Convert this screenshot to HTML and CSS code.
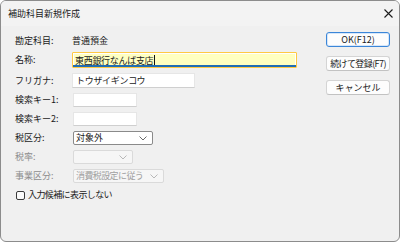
FILE: index.html
```html
<!DOCTYPE html>
<html lang="ja">
<head>
<meta charset="utf-8">
<title>補助科目新規作成</title>
<link rel="stylesheet" href="styles.css">
</head>
<body>
<div class="window">
  <div class="titlebar">
    <span class="title">補助科目新規作成</span>
    <span class="close"><svg width="9" height="9" viewBox="0 0 9 9"><path d="M0.5 0.5L8.5 8.5M8.5 0.5L0.5 8.5" stroke="#1c1c1c" stroke-width="1.1" fill="none"/></svg></span>
  </div>
  <div class="content">
    <div class="form">
      <span class="label top">勘定科目:</span><span class="value top">普通預金</span>
      <span class="label">名称:</span><div class="field name">東西銀行なんば支店<span class="caret"></span></div>
      <span class="label">フリガナ:</span><div class="field kana">トウザイギンコウ</div>
      <span class="label">検索キー1:</span><div class="field key"></div>
      <span class="label">検索キー2:</span><div class="field key"></div>
      <span class="label">税区分:</span><div class="select tax"><span>対象外</span><svg class="chev" width="8" height="5" viewBox="0 0 8 5"><path d="M0.5 0.5L4 4L7.5 0.5" stroke="#6a6a6a" fill="none"/></svg></div>
      <span class="label disabled">税率:</span><div class="select rate off"><span></span><svg class="chev" width="8" height="5" viewBox="0 0 8 5"><path d="M0.5 0.5L4 4L7.5 0.5" stroke="#b8b8b8" fill="none"/></svg></div>
      <span class="label disabled">事業区分:</span><div class="select biz off"><span class="tight">消費税設定に従う</span><svg class="chev" width="8" height="5" viewBox="0 0 8 5"><path d="M0.5 0.5L4 4L7.5 0.5" stroke="#b8b8b8" fill="none"/></svg></div>
      <label class="check"><span class="box"></span><span class="tight">入力候補に表示しない</span></label>
    </div>
    <div class="buttons">
      <button class="btn primary">OK(F12)</button>
      <button class="btn tight">続けて登録(F7)</button>
      <button class="btn">キャンセル</button>
    </div>
  </div>
</div>
</body>
</html>
```

FILE: styles.css
```css
* { box-sizing: border-box; }
html, body { margin: 0; padding: 0; background: #ffffff; }
body {
  font-family: "Noto Sans CJK JP", "Noto Sans", sans-serif;
  font-size: 9px;
  color: #1b1b1b;
}
.tight { letter-spacing: -0.6px; }
.window {
  width: 400px;
  height: 242px;
  border: 1px solid #8c8c8c;
  border-radius: 6px;
  background: #f0f0f0;
  overflow: hidden;
  display: flex;
  flex-direction: column;
}
.titlebar {
  height: 25px;
  flex: none;
  background: #f3f3f3;
  display: flex;
  align-items: center;
  justify-content: space-between;
  padding: 0 6px 0 7px;
}
.title { font-size: 9px; line-height: 12px; color: #1b1b1b; }
.close { display: flex; width: 9px; height: 9px; }
.content {
  flex: 1;
  display: flex;
  justify-content: space-between;
  padding: 6px 9px 0 14px;
}
.form {
  display: grid;
  grid-template-columns: 57px auto;
  grid-template-rows: 15px 16px 15px 14px 14px 14px 14px 14px 14px;
  row-gap: 5px;
  align-items: center;
  justify-items: start;
  align-content: start;
}
.label, .value { line-height: 12px; white-space: nowrap; }
.top { align-self: end; }
.label.disabled { color: #8d8d8d; }
.field {
  height: 100%;
  background: #ffffff;
  border: 1px solid #e6e6e6;
  border-bottom-color: #cfcfcf;
  padding: 0 3px;
  line-height: 13px;
  white-space: nowrap;
}
.field.name {
  width: 225px;
  border: 1.5px solid #ffc942;
  border-radius: 1px;
  background: #ffffc0;
  box-shadow: inset 0 -2px 0 #1f6db4, inset 0 0 0 1px #ffffff;
  padding-left: 2px;
  display: flex;
  align-items: center;
  letter-spacing: -0.3px;
}
.caret {
  display: inline-block;
  width: 1px;
  height: 10px;
  background: #111;
  margin-left: 1px;
}
.field.kana { width: 123px; letter-spacing: -0.3px; }
.field.key { width: 64px; margin-left: 1px; }
.select {
  height: 100%;
  display: flex;
  align-items: center;
  justify-content: space-between;
  background: #ffffff;
  border: 1px solid #8a8a8a;
  border-radius: 2px;
  padding: 0 5px 0 2px;
  margin-left: 1px;
  line-height: 12px;
  white-space: nowrap;
}
.select.tax { width: 80px; }
.select.off {
  background: #f6f6f6;
  border-color: #dadada;
  color: #a0a0a0;
}
.select.rate { width: 60px; }
.select.biz { width: 91px; }
.chev { flex: none; }
.check {
  grid-column: 1 / 3;
  display: flex;
  align-items: center;
  line-height: 12px;
  margin-left: 1px;
}
.box {
  width: 9px;
  height: 9px;
  border: 1px solid #3a3a3a;
  border-radius: 2px;
  background: #fafafa;
  margin-right: 3px;
}
.buttons {
  display: flex;
  flex-direction: column;
  gap: 9px;
}
.btn {
  width: 64px;
  height: 15px;
  padding: 0;
  font-family: inherit;
  font-size: 9px;
  line-height: 12px;
  color: #1b1b1b;
  background: #fdfdfd;
  border: 1px solid #d4d4d4;
  border-bottom-color: #c2c2c2;
  border-radius: 3px;
  white-space: nowrap;
}
.btn.tight { letter-spacing: -0.6px; }
.btn.primary {
  border: 1px solid #3b86d8;
  box-shadow: inset 0 0 0 1px #d6e7fa;
}
```
